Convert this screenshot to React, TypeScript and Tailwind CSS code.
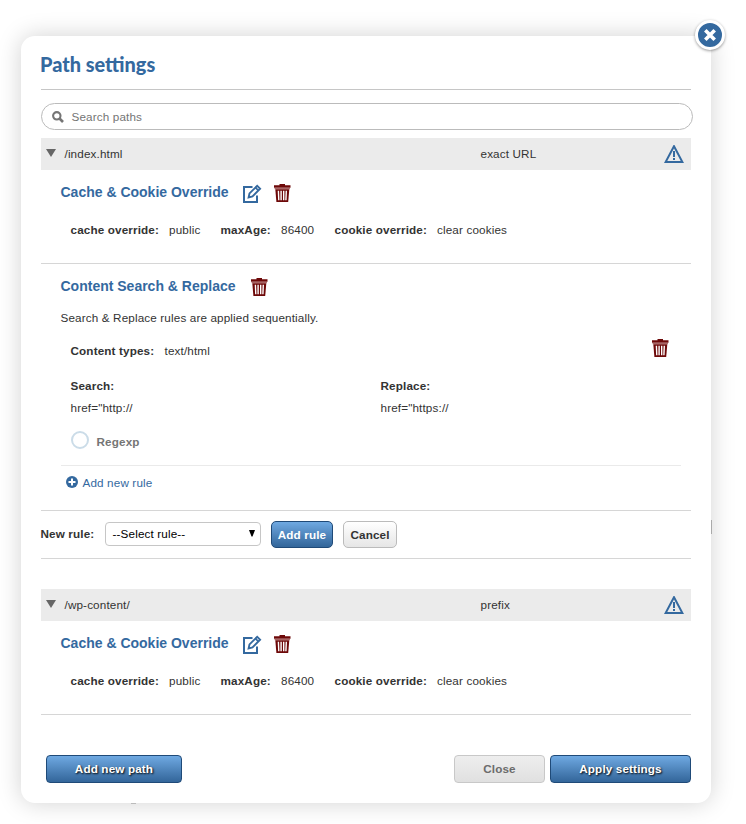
import React from "react";

function Trash() {
  return (
    <svg width="17" height="19" viewBox="0 0 17 19" className="block shrink-0">
      <path d="M5.5 1.2V0h5.5V1.2H16.5v2.6H0V1.2Z" fill="#6d0808" />
      <path d="M0.6 3.8h15.3v1.4H0.6Z" fill="#a86464" />
      <path d="M1.3 5.2h14L14.2 18H2.4Z" fill="#6d0808" />
      <path
        d="M4.4 6.8L4.8 16.2M7.1 6.8v9.4M9.7 6.8v9.4M12.3 6.8L11.9 16.2"
        fill="none"
        stroke="#fff"
        strokeWidth="1.4"
      />
    </svg>
  );
}

function Edit() {
  return (
    <svg width="19" height="19" viewBox="0 0 19 19" className="block shrink-0" fill="none" stroke="#34699f">
      <path d="M9.5 3H1v15h13v-6.5" strokeWidth="2" />
      <path d="M5.6 13.4l.9-4L14.2 1.8l2.9 2.9-7.6 7.7Z" strokeWidth="1.9" />
      <path d="M12.3 3.4l3.2 3.2" strokeWidth="1.6" />
    </svg>
  );
}

function Warning() {
  return (
    <svg width="20" height="19" viewBox="0 0 20 19" className="block shrink-0">
      <path d="M10 1.2L18.4 17H1.6Z" fill="none" stroke="#34699f" strokeWidth="2" />
      <path d="M9 6h2v6H9ZM9 13h2v2H9Z" fill="#34699f" />
    </svg>
  );
}

function PathRow({ path, kind }: { path: string; kind: string }) {
  return (
    <div className="flex h-8 items-center bg-[#ebebeb] pl-[5px] pr-[7px]">
      <svg width="10" height="8" viewBox="0 0 10 8" className="mr-[8.5px] block -translate-y-px">
        <path d="M0 0h10L5 8Z" fill="#666" />
      </svg>
      <span className="w-[416px]">{path}</span>
      <span className="flex-1">{kind}</span>
      <Warning />
    </div>
  );
}

function CacheRule() {
  return (
    <section className="h-[94px] border-b border-[#d6d6d6] pl-[19.5px]">
      <div className="flex h-[46px] items-center">
        <h2 className="w-[182.5px] -translate-y-px text-[14px] font-bold tracking-normal text-[#34699f]">
          Cache &amp; Cookie Override
        </h2>
        <Edit />
        <span className="w-3" />
        <Trash />
      </div>
      <div className="flex h-7 items-center pl-[10px]">
        <b className="w-[98.5px]">cache override:</b>
        <span className="w-[51.5px]">public</span>
        <b className="w-[60.5px]">maxAge:</b>
        <span className="w-[53.5px]">86400</span>
        <b className="w-[102.5px]">cookie override:</b>
        <span>clear cookies</span>
      </div>
    </section>
  );
}

const blue =
  "border border-[#1f4a78] bg-gradient-to-b from-[#6fa9e2] to-[#33669a] font-bold text-white";

export default function App() {
  return (
    <div
      className="h-[824px] w-[746px] overflow-hidden bg-white pl-[21px] pt-9 text-[11.7px] leading-4 tracking-[0.14px] text-[#333]"
      style={{ fontFamily: '"Liberation Sans", Arial, sans-serif' }}
    >
      <main className="relative h-[767px] w-[690px] rounded-[14px] bg-white px-5 shadow-[0_0_25px_rgba(0,0,0,0.18)]">
        <div className="absolute right-[-1px] top-[484px] h-[14px] w-px bg-[#aaa]" />
        <div className="absolute bottom-[-1px] left-[110px] h-px w-[5px] bg-[#bbb]" />
        <button
          aria-label="Close dialog"
          className="absolute right-[-14px] top-[-16px] flex h-[30px] w-[30px] items-center justify-center rounded-full border-[3px] border-white bg-[#34699f] shadow-[0_1px_3px_rgba(0,0,0,0.4)]"
        >
          <svg width="12" height="12" viewBox="0 0 12 12">
            <path d="M1.3 1.3l9.4 9.4M10.7 1.3l-9.4 9.4" stroke="#fff" strokeWidth="3.6" />
          </svg>
        </button>

        <header className="flex h-[54px] items-center border-b border-[#c6c6c6]">
          <h1
            className="-translate-x-px translate-y-px text-[19.9px] font-black leading-6 tracking-normal text-[#34699f]"
            style={{ fontFamily: 'Lato, "Open Sans", sans-serif' }}
          >
            Path settings
          </h1>
        </header>

        <div className="mt-[13px] flex h-[27px] w-[652px] items-center rounded-full border border-[#bbb] pl-[10px] text-[#757575]">
          <svg width="12" height="12" viewBox="0 0 12 12" className="mr-[7.5px]">
            <circle cx="4.8" cy="4.8" r="3.7" fill="none" stroke="#757575" strokeWidth="2.1" />
            <path d="M7.5 7.5l3.5 3.5" stroke="#757575" strokeWidth="2.6" />
          </svg>
          <span>Search paths</span>
        </div>

        <div className="mt-2">
          <PathRow path="/index.html" kind="exact URL" />
        </div>
        <CacheRule />

        <section className="h-[247px] border-b border-[#d6d6d6] pl-5 pr-[10px]">
          <div className="flex h-[46px] items-center">
            <h2 className="w-[190px] -translate-x-[0.5px] -translate-y-px text-[14px] font-bold tracking-normal text-[#34699f]">
              Content Search &amp; Replace
            </h2>
            <Trash />
          </div>
          <p className="h-4 -translate-x-[0.5px]">Search &amp; Replace rules are applied sequentially.</p>
          <div className="h-[140px] border-b border-[#eaeaea] pl-[9.5px]">
            <div className="flex pt-[13px]">
              <b className="w-[94px] pt-1">Content types:</b>
              <span className="flex-1 pt-1">text/html</span>
              <span className="mr-[12px] h-5">
                <Trash />
              </span>
            </div>
            <div className="mt-[19px] grid grid-cols-[310px_1fr] gap-y-[6px]">
              <b>Search:</b>
              <b>Replace:</b>
              <span>href="http://</span>
              <span>href="https://</span>
            </div>
            <div className="mt-[15px] flex items-center">
              <span className="ml-[0.5px] mr-[7.5px] h-[18px] w-[18px] rounded-full border-2 border-[#cbdce8]" />
              <b className="translate-y-[2px] text-[#757575]">Regexp</b>
            </div>
          </div>
          <div className="flex h-[34px] items-center pl-[5px] text-[#34699f]">
            <svg width="12" height="12" viewBox="0 0 12 12" className="mr-[4.5px] -translate-y-px">
              <circle cx="6" cy="6" r="6" fill="#34699f" />
              <path d="M6 2.5v7M2.5 6h7" stroke="#fff" strokeWidth="2" />
            </svg>
            <span>Add new rule</span>
          </div>
        </section>

        <div className="flex h-12 items-center border-b border-[#d6d6d6]">
          <b className="w-[64px] -translate-x-[0.5px] -translate-y-px">New rule:</b>
          <div className="flex h-6 w-[156px] -translate-y-px items-center justify-between rounded-[4px] border border-[#c6c6c6] pl-[6.5px] pr-[5px] text-black">
            <span>--Select rule--</span>
            <svg width="6" height="7" viewBox="0 0 6 7">
              <path d="M0 0h6L3.5 6.5h-1Z" fill="#000" />
            </svg>
          </div>
          <button className={`ml-[10px] h-[27px] w-[62px] whitespace-nowrap rounded-[5px] ${blue}`}>Add rule</button>
          <button className="ml-[10px] h-[27px] w-[54px] rounded-[5px] border border-[#bbb] bg-gradient-to-b from-white to-[#e6e6e6] font-bold">
            Cancel
          </button>
        </div>

        <div className="mt-[30px]">
          <PathRow path="/wp-content/" kind="prefix" />
        </div>
        <CacheRule />

        <footer className="mt-10 flex pl-[5px]">
          <button className={`h-7 w-[136px] rounded-[4px] [text-shadow:1px_1px_2px_#000] ${blue}`}>Add new path</button>
          <button className="ml-auto h-7 w-[91px] rounded-[4px] border border-[#c8c8c8] bg-gradient-to-b from-[#eee] to-[#e0e0e0] font-bold text-[#6c6c6c]">
            Close
          </button>
          <button className={`ml-[5px] h-7 w-[141px] rounded-[4px] [text-shadow:1px_1px_2px_#000] ${blue}`}>
            Apply settings
          </button>
        </footer>
      </main>
    </div>
  );
}
